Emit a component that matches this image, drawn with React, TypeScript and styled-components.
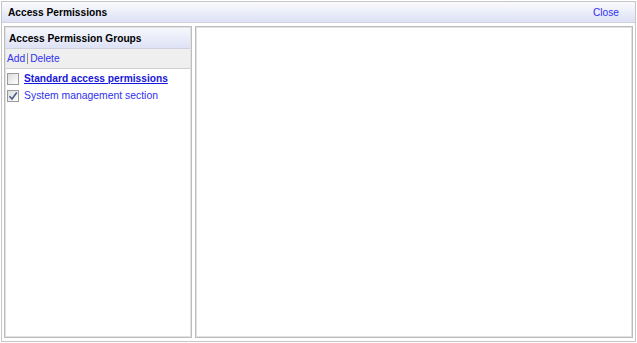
import React from "react";
import styled, { createGlobalStyle } from "styled-components";

const Global = createGlobalStyle`
  html, body { margin: 0; padding: 0; background: #ffffff; }
  body { font-family: "Liberation Sans", Arial, sans-serif; font-size: 10.2px; }
  * { box-sizing: border-box; }
`;

const Window = styled.div`
  width: 635px;
  height: 341px;
  margin: 1px;
  border: 1px solid #c6c6c6;
  display: flex;
  flex-direction: column;
  background: #ffffff;
`;

const TitleBar = styled.div`
  height: 21px;
  flex: none;
  display: flex;
  align-items: center;
  justify-content: space-between;
  padding: 0 16px 0 6px;
  background: linear-gradient(#fbfbfe, #dce1f4);
  border-bottom: 1px solid #d0d3de;
`;

const Title = styled.span`
  font-weight: bold;
  color: #000000;
`;

const Link = styled.a<{ $strong?: boolean }>`
  color: ${(p) => (p.$strong ? "#1818d8" : "#3030ee")};
  font-weight: ${(p) => (p.$strong ? "bold" : "normal")};
  text-decoration: ${(p) => (p.$strong ? "underline" : "none")};
  cursor: pointer;
`;

const ItemText = styled(Link)`
  font-size: ${(p) => (p.$strong ? "10.2px" : "10.4px")};
`;

const Body = styled.div`
  flex: 1;
  display: flex;
  gap: 3px;
  padding: 3px 2px 3px 2px;
  min-height: 0;
`;

const Panel = styled.div<{ $width?: number }>`
  ${(p) => (p.$width ? `width: ${p.$width}px; flex: none;` : "flex: 1;")}
  border: 1px solid #bcbcbc;
  box-shadow: inset 0 0 0 1px #e2e2e2;
  background: #ffffff;
  display: flex;
  flex-direction: column;
`;

const PanelHeader = styled.div`
  height: 21px;
  display: flex;
  align-items: center;
  padding-left: 3px;
  font-weight: bold;
  color: #000000;
  background: linear-gradient(#f7f8fd, #dde2f5);
  border-bottom: 1px solid #cfd2dc;
  margin: 1px 1px 0 1px;
`;

const Toolbar = styled.div`
  height: 20px;
  display: flex;
  align-items: center;
  padding-left: 1px;
  background: #efefef;
  border-bottom: 1px solid #cfcfcf;
  margin: 0 1px;
`;

const Sep = styled.span`
  width: 1px;
  height: 11px;
  background: #8a8a8a;
  margin: 0 2px;
`;

const List = styled.div`
  padding-top: 1px;
  display: flex;
  flex-direction: column;
`;

const Row = styled.div`
  height: 17px;
  display: flex;
  align-items: center;
  padding-left: 2px;
`;

const Box = styled.span`
  width: 12px;
  height: 12px;
  border: 1px solid #9a9a9a;
  background: linear-gradient(135deg, #dcdcdc, #ffffff);
  margin-right: 5px;
  display: flex;
  align-items: center;
  justify-content: center;
  flex: none;
`;

const Check = ({ checked }: { checked?: boolean }) => (
  <Box>
    {checked && (
      <svg width="10" height="10" viewBox="0 0 10 10">
        <path d="M1.5 5.2 L4 8 L8.8 1.5" fill="none" stroke="#4a5a88" strokeWidth="1.6" />
      </svg>
    )}
  </Box>
);

export default function App() {
  return (
    <>
      <Global />
      <Window>
        <TitleBar>
          <Title>Access Permissions</Title>
          <Link>Close</Link>
        </TitleBar>
        <Body>
          <Panel $width={188}>
            <PanelHeader>Access Permission Groups</PanelHeader>
            <Toolbar>
              <Link>Add</Link>
              <Sep />
              <Link>Delete</Link>
            </Toolbar>
            <List>
              <Row>
                <Check />
                <ItemText $strong>Standard access permissions</ItemText>
              </Row>
              <Row>
                <Check checked />
                <ItemText>System management section</ItemText>
              </Row>
            </List>
          </Panel>
          <Panel />
        </Body>
      </Window>
    </>
  );
}
